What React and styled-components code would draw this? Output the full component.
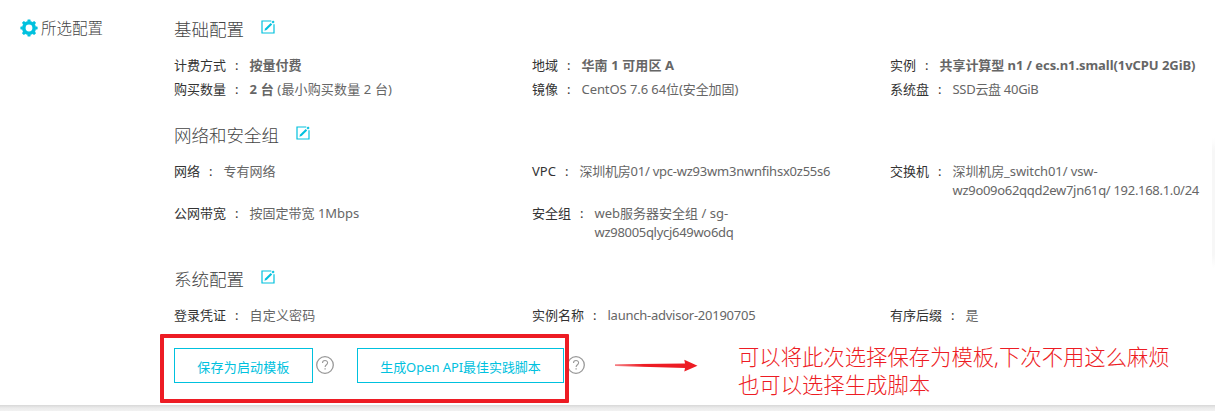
import React from "react";
import styled, { createGlobalStyle } from "styled-components";

const GlobalStyle = createGlobalStyle`
  * { box-sizing: border-box; }
  body {
    margin: 0;
    background: #fff;
    color: #666;
    font: 13px/19px "Noto Sans", "Noto Sans CJK SC", sans-serif;
    font-weight: 400;
  }
`;

const Page = styled.div`
  position: relative;
  width: 1215px;
  height: 411px;
  overflow: hidden;
  display: flex;
  flex-direction: column;
`;

const Panel = styled.div`
  display: flex;
  height: 405px;
  background: #fff;
`;

const FooterStrip = styled.div`
  height: 6px;
  background: linear-gradient(#d8d8d8, #ebebeb 50%, #f2f2f2);
`;

const Sidebar = styled.div`
  display: flex;
  align-items: center;
  gap: 3px;
  width: 174px;
  height: 24px;
  margin-top: 16px;
  padding-left: 20px;
  font-size: 15.5px;
  font-weight: 300;
  color: #444;
  white-space: nowrap;
`;

const Main = styled.div`
  flex: 1;
  padding-top: 17px;
`;

const Section = styled.section`
  margin-bottom: ${(p) => p.$after}px;
`;

const Title = styled.h2`
  display: flex;
  align-items: center;
  gap: 17px;
  height: 24px;
  margin: 0 0 15px;
  font-size: 17.5px;
  font-weight: 300;
  line-height: 24px;
  color: #444;

  svg { margin-top: -4px; }
`;

const Fields = styled.div`
  display: grid;
  grid-template-columns: 358px 358px 325px;
  row-gap: ${(p) => p.$gap}px;
`;

const FieldRow = styled.div`
  display: flex;
  white-space: nowrap;
`;

const Label = styled.span`
  color: #333;
`;

const Colon = styled.span`
  width: 23.5px;
  padding-left: 9px;
  color: #333;
`;

const Value = styled.span`
  letter-spacing: ${(p) => p.$tracking || 0}px;
  color: #666;
`;

const Line = styled.span`
  display: block;
  letter-spacing: ${(p) => p.$tracking || 0}px;
`;

const Actions = styled.div`
  display: flex;
  align-items: center;
  height: 35px;
`;

const OutlineButton = styled.button`
  width: ${(p) => p.$width}px;
  height: 35px;
  margin-right: 3px;
  padding: 3px 0 0;
  border: 1px solid #00c1de;
  background: #fff;
  color: #00c1de;
  font: inherit;
  letter-spacing: ${(p) => p.$tracking || 0}px;
  white-space: nowrap;
`;

const HelpSlot = styled.span`
  display: flex;
  width: 41px;
  margin-top: -1px;
`;

const Highlight = styled.div`
  position: absolute;
  left: 160px;
  top: 334px;
  width: 409px;
  height: 69px;
  border: 4px solid #ed1c24;
  border-radius: 1px;
`;

const ArrowMark = styled.svg`
  position: absolute;
  left: 614px;
  top: 358px;
`;

const Note = styled.div`
  position: absolute;
  left: 738px;
  top: 343px;
  font-size: 21.35px;
  font-weight: 300;
  line-height: 28px;
  color: #ed1c24;
  white-space: nowrap;
`;

const EdgeShadow = styled.div`
  position: absolute;
  right: 0;
  top: 138px;
  width: 3px;
  height: 130px;
  background: linear-gradient(transparent, #f7f7f7 10%, #f7f7f7 90%, transparent);
`;

const GearIcon = () => (
  <svg width="18" height="18" viewBox="0 0 18 18">
    <circle cx="9" cy="9" r="5.2" fill="none" stroke="#00c1de" strokeWidth="3.6" />
    {[0, 45, 90, 135, 180, 225, 270, 315].map((a) => (
      <path key={a} d="M7.2 2.6 7.7 0.4h2.6l0.5 2.2z" fill="#00c1de" transform={`rotate(${a} 9 9)`} />
    ))}
  </svg>
);

const EditIcon = () => (
  <svg width="14" height="14" viewBox="0 0 14 14" fill="none" stroke="#00c1de">
    <path d="M10.3 1H1V13H13V4.2" strokeWidth="1.2" />
    <path d="M3.4 10.8 4.1 8.5 9.7 2.9 11.2 4.4 5.6 10Z" fill="#00c1de" stroke="none" />
    <path d="M10.5 2.1 12.1 0.5 13.6 2 12 3.6Z" fill="#00c1de" stroke="none" />
  </svg>
);

const HelpIcon = () => (
  <svg width="18" height="18" viewBox="0 0 18 18" fill="none" stroke="#999">
    <circle cx="9" cy="9" r="8.3" strokeWidth="1.3" />
    <path d="M6.5 7C6.5 3.7 11.6 3.8 11.6 6.8C11.6 8.7 9.1 8.8 9.1 11" strokeWidth="1.1" />
    <path d="M9.1 12.2v1.4" strokeWidth="1.3" />
  </svg>
);

const Field = ({ label, tracking, children }) => (
  <FieldRow>
    <Label>{label}</Label>
    <Colon>:</Colon>
    <Value $tracking={tracking}>{children}</Value>
  </FieldRow>
);

export default function App() {
  return (
    <Page>
      <GlobalStyle />
      <Panel>
        <Sidebar>
          <GearIcon />
          所选配置
        </Sidebar>
        <Main>
          <Section $after={24}>
            <Title>基础配置<EditIcon /></Title>
            <Fields $gap={5}>
              <Field label="计费方式"><b>按量付费</b></Field>
              <Field label="地域" tracking={0.1}><b>华南 1 可用区 A</b></Field>
              <Field label="实例" tracking={-0.06}><b>共享计算型 n1 / ecs.n1.small(1vCPU 2GiB)</b></Field>
              <Field label="购买数量" tracking={0.15}><b>2 台</b> (最小购买数量 2 台)</Field>
              <Field label="镜像" tracking={-0.08}>CentOS 7.6 64位(安全加固)</Field>
              <Field label="系统盘" tracking={-0.3}>SSD云盘 40GiB</Field>
            </Fields>
          </Section>
          <Section $after={25}>
            <Title>网络和安全组<EditIcon /></Title>
            <Fields $gap={4}>
              <Field label="网络">专有网络</Field>
              <Field label="VPC" tracking={-0.23}>深圳机房01/ vpc-wz93wm3nwnfihsx0z55s6</Field>
              <Field label="交换机">
                <Line $tracking={-0.1}>深圳机房_switch01/ vsw-</Line>
                <Line $tracking={-0.3}>wz9o09o62qqd2ew7jn61q/ 192.168.1.0/24</Line>
              </Field>
              <Field label="公网带宽">按固定带宽 1Mbps</Field>
              <Field label="安全组">
                <Line>web服务器安全组 / sg-</Line>
                <Line $tracking={-0.3}>wz98005qlycj649wo6dq</Line>
              </Field>
            </Fields>
          </Section>
          <Section $after={23}>
            <Title>系统配置<EditIcon /></Title>
            <Fields $gap={4}>
              <Field label="登录凭证" tracking={0.2}>自定义密码</Field>
              <Field label="实例名称" tracking={-0.25}>launch-advisor-20190705</Field>
              <Field label="有序后缀">是</Field>
            </Fields>
          </Section>
          <Actions>
            <OutlineButton $width={139} $tracking={0.2}>保存为启动模板</OutlineButton>
            <HelpSlot><HelpIcon /></HelpSlot>
            <OutlineButton $width={207} $tracking={-0.06}>生成Open API最佳实践脚本</OutlineButton>
            <HelpSlot><HelpIcon /></HelpSlot>
          </Actions>
        </Main>
      </Panel>
      <FooterStrip />
      <EdgeShadow />
      <Highlight />
      <ArrowMark width="84" height="16" viewBox="0 0 84 16">
        <defs>
          <linearGradient id="shaft" x1="0" x2="1" y1="0" y2="0">
            <stop offset="0" stopColor="#ed1c24" stopOpacity="0.55" />
            <stop offset="0.35" stopColor="#ed1c24" />
          </linearGradient>
        </defs>
        <path d="M1 6.3 71 5.6 70.3 1.8 83.5 7.8 70.3 13.4 71 10 1 7.9Z" fill="url(#shaft)" />
      </ArrowMark>
      <Note>
        可以将此次选择保存为模板,下次不用这么麻烦
        <br />
        也可以选择生成脚本
      </Note>
    </Page>
  );
}
